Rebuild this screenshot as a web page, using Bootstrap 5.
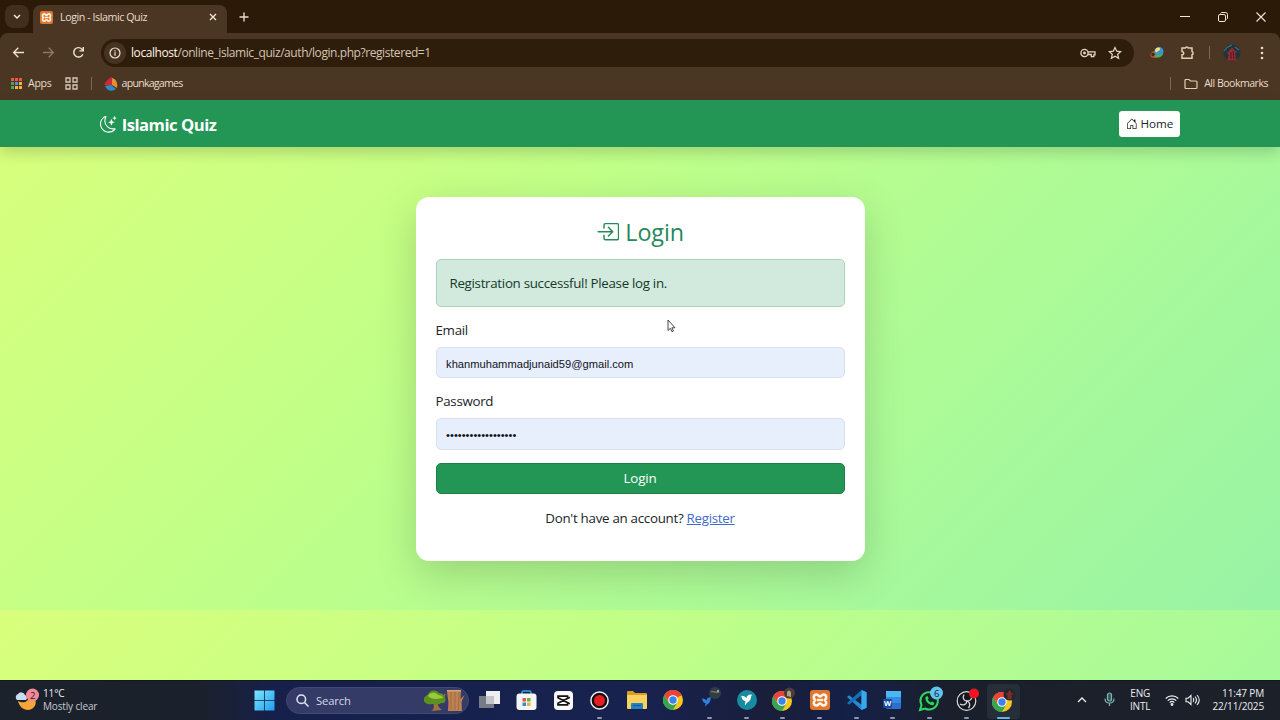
<!DOCTYPE html>
<html lang="en">
<head>
<meta charset="utf-8">
<meta name="viewport" content="width=device-width, initial-scale=1">
<title>Login - Islamic Quiz</title>
<link href="https://cdn.jsdelivr.net/npm/bootstrap@5.3.0/dist/css/bootstrap.min.css" rel="stylesheet">
<style>
  html { font-size: 13.333px; }
  body { width: 1280px; height: 720px; overflow: hidden; font-family: "Open Sans", "Noto Sans", sans-serif; color: #212529; }
  svg { display: block; flex: none; }

  /* browser window */
  .chrome { height: 100px; background: #2b1a08; color: #e9dccb; font-size: 10.7px; }
  .tabstrip { height: 33px; }
  .tabsearch { width: 24px; height: 23px; border-radius: 8px; background: #412e1c; margin: 5px 4px 0 5px; }
  .tab { width: 194px; height: 28px; margin-top: 5px; padding: 0 10px 4px 7px; background: #4a3623; border-radius: 8px 8px 0 0; }
  .tab-name { letter-spacing: -.44px; margin-left: 7px; }
  .newtab { margin: 8px 0 0 8px; }
  .winctl { gap: 28px; padding-right: 14px; }
  .toolbox { height: 67px; background: #4a3623; border-radius: 8px 8px 0 0; }
  .toolrow { height: 39px; padding-left: 12px; }
  .url { width: 1033px; height: 28px; border-radius: 14px; background: #2f1d0c; margin-left: 16px; padding: 0 12px 0 3px; }
  .info { width: 22px; height: 22px; border-radius: 50%; background: #463320; margin-right: 5px; }
  .addr { font-size: 12px; color: #d3c4b2; letter-spacing: -.43px; }
  .addr b { font-weight: 400; color: #fff3e4; }
  .bookrow { height: 23px; padding: 0 12px 0 11px; font-size: 10.6px; letter-spacing: -.3px; }
  .tight { letter-spacing: -.52px; }
  .vline { width: 1px; height: 13px; background: #7c6852; }

  /* page */
  .viewport { height: 580px; background: linear-gradient(135deg, #d9ff7c 0%, #c0ff88 38%, #a9fa99 72%, #98f3a5 100%) 0 0 / 1280px 510px repeat-y; }
  .topnav { height: 47px; background: #239655; box-shadow: 0 6px 13px rgba(0,0,0,.16); }
  .wrap { width: 1080px; margin: 0 auto; padding-top: 1px; }
  .brand { font-size: 16.67px; font-weight: 700; color: #fff; gap: 5px; letter-spacing: -.5px; line-height: 23px; padding-top: 1px; }
  .homebtn { height: 26px; width: 61px; font-size: 11.67px; gap: 3px; letter-spacing: -.1px; background: #fdfffd; border-radius: 3.3px; color: #212529; }
  .login { width: 449px; height: 364px; margin: 50px auto 0; padding: 20px; border-radius: 13px; background: #fefffe; box-shadow: 0 13px 40px rgba(0,0,0,.17); }
  .login h3 { color: #26895a; font-weight: 500; font-size: 23.33px; height: 28px; gap: 6px; margin-bottom: 14px; padding-top: 2px; letter-spacing: -.1px; }
  .login .alert { background: #d2eadd; border-color: #a9d3bd; border-radius: 5px; color: #15392a; height: 48px; margin-bottom: 13.5px; padding: 14px 13px 0; }
  .segoe { letter-spacing: -.3px; }
  .login .form-label { height: 20px; margin-bottom: 6.6px; padding-top: .6px; display: block; }
  .login .form-control { height: 31.4px; background: #e8effc; border-color: #d9e0ee; border-radius: 5px; font-family: "Liberation Sans", sans-serif; font-size: 11.15px; color: #10131c; padding: 4px 9px 2px 9.6px; margin-bottom: 13.3px; }
  .login .btn { height: 31px; background: #239655; border: 1px solid #1a8048; border-radius: 5px; color: #fff; padding: 1px 0 0; letter-spacing: -.1px; }
  .login .signup { margin-top: 14.5px; letter-spacing: -.28px; }
  .login a { color: #416bc9; }
  .pointer { position: absolute; left: 667px; top: 319px; }

  /* taskbar */
  .taskbar { height: 40px; background: linear-gradient(90deg, #1c222b 0, #1b212c 200px, #16204b 275px, #18224f 640px, #191e3a 770px, #152048 850px, #1a1f2c 950px, #1c2129 100%); color: #eceef2; font-size: 10px; line-height: 13px; border-top: 1px solid #15191f; letter-spacing: -.15px; }
  .weather { width: 238px; padding-left: 14px; gap: 4px; padding-bottom: 2px; }
  .start { width: 48px; padding-left: 16px; }
  .search { width: 183px; height: 27px; border-radius: 14px; background: #343b67; border: 1px solid #414871; padding: 0 2px 0 9px; font-size: 11.3px; gap: 9px; }
  .apps { display: grid; grid-template-columns: repeat(15, 36.67px); margin: 0 -1px 0 2.7px; height: 36px; }
  .app { display: flex; justify-content: center; align-items: center; position: relative; padding-bottom: 1px; }
  .run::after { content: ""; position: absolute; left: 15.5px; bottom: 0; width: 5px; height: 2px; border-radius: 1px; background: #9295b0; }
  .now { background: #262e39; border-radius: 4px; margin: 1px 2px 0; }
  .now::after { left: 10px; width: 13px; background: #5db6e8; }
  .tray { margin-left: auto; padding: 0 16px 2px 0; }
</style>
</head>
<body class="d-flex flex-column">

<svg width="0" height="0" class="position-absolute">
  <defs>
    <symbol id="chromelogo" viewBox="0 0 20 20">
      <circle cx="10" cy="10" r="10" fill="#f9c61c"/>
      <path d="M10 10 1.34 5A10 10 0 0 1 18.66 5Z" fill="#e8453a"/>
      <path d="M1.34 5A10 10 0 0 0 10 20L14.3 12.5 5.7 12.5Z" fill="#36a453"/>
      <path d="M10 5.4h8.9A10 10 0 0 0 1.34 5L6 12.5Z" fill="#e8453a"/>
      <circle cx="10" cy="10" r="4.8" fill="#fff"/><circle cx="10" cy="10" r="3.7" fill="#3b82ec"/>
    </symbol>
    <symbol id="xampp" viewBox="0 0 20 20">
      <rect width="20" height="20" rx="3" fill="#e0772f"/>
      <path d="M6.5 4.5C3.5 4.5 3 8 5 10 3 12 3.500 15.500 6.500 15.500 8.500 15.500 8.500 13.500 10 13.500 11.500 13.500 11.500 15.500 13.500 15.500 16.500 15.500 17 12 15 10 17 8 16.500 4.500 13.500 4.500 11.500 4.500 11.500 6.500 10 6.500 8.500 6.500 8.500 4.500 6.500 4.500Z" fill="none" stroke="#fff4e8" stroke-width="2.600"/>
      <path d="M7 10h6" stroke="#fff4e8" stroke-width="2.400"/>
    </symbol>
    <symbol id="bird" viewBox="0 0 20 20"><path d="M2 4c3 0 5 1 7 3 1-3 3-5 6-5l3 1-2 1c0 5-2 8-6 10l-3 4c0-3 0-4 1-6C4 11 2 8 2 4Z"/></symbol>
  </defs>
</svg>

<header class="chrome">
  <div class="tabstrip d-flex">
    <div class="tabsearch d-flex align-items-center justify-content-center">
      <svg width="8" height="6" viewBox="0 0 8 6" fill="none" stroke="#f3e7d8" stroke-width="1.500"><path d="m1 1 3 3 3-3"/></svg>
    </div>
    <div class="tab d-flex align-items-center">
      <svg width="13" height="13"><use href="#xampp"/></svg>
      <span class="tab-name me-auto">Login - Islamic Quiz</span>
      <svg width="8" height="8" viewBox="0 0 8 8" stroke="#f3e7d8" stroke-width="1.300"><path d="m1 1 6 6M7 1 1 7"/></svg>
    </div>
    <svg class="newtab" width="18" height="18" viewBox="0 0 18 18" stroke="#e9dccb" stroke-width="1.400"><path d="M9 4.500v9M4.500 9h9"/></svg>
    <div class="winctl d-flex align-items-center ms-auto">
      <svg width="10" height="10" viewBox="0 0 10 10" stroke="#f3e7d8"><path d="M0 4.500h10"/></svg>
      <svg width="10" height="10" viewBox="0 0 10 10" fill="none" stroke="#f3e7d8"><rect x=".5" y="2.500" width="7" height="7" rx="1.500"/><path d="M2.500 1.500C3 .7 3.500.5 4 .5h3.500a2 2 0 0 1 2 2V6c0 .7-.4 1-.9 1.400"/></svg>
      <svg width="10" height="10" viewBox="0 0 10 10" stroke="#f3e7d8" stroke-width="1.100"><path d="m.5.5 9 9M9.500.5l-9 9"/></svg>
    </div>
  </div>

  <div class="toolbox">
    <div class="toolrow d-flex align-items-center">
      <svg width="13" height="13" viewBox="0 0 13 13" fill="none" stroke="#efe3d4" stroke-width="1.300"><path d="M12 6.500H1.500M6.300 1.800 1.600 6.500l4.700 4.700"/></svg>
      <svg style="margin-left:17px" width="13" height="13" viewBox="0 0 13 13" fill="none" stroke="#8d7a66" stroke-width="1.300"><path d="M1 6.500h10.500M6.700 1.800l4.700 4.700-4.700 4.700"/></svg>
      <svg style="margin-left:17px" width="13" height="13" viewBox="0 0 13 13" fill="none" stroke="#efe3d4" stroke-width="1.400"><path d="M10.800 8.200A4.700 4.700 0 1 1 10 3.200L11 4.500"/><path d="M11.300 1v3.900H7.400"/></svg>
      <div class="url d-flex align-items-center">
        <div class="info d-flex align-items-center justify-content-center">
          <svg width="12" height="12" viewBox="0 0 12 12" fill="none" stroke="#f3e7d8" stroke-width="1.200"><circle cx="6" cy="6" r="5"/><path d="M6 5.300v3.400M6 3.200v1.200"/></svg>
        </div>
        <span class="addr"><b>localhost</b>/online_islamic_quiz/auth/login.php?registered=1</span>
        <svg class="ms-auto" width="16" height="10" viewBox="0 0 16 10" fill="none" stroke="#e5d7c5" stroke-width="1.300"><circle cx="4.500" cy="5" r="3.600"/><circle cx="4.500" cy="5" r=".8"/><path d="M8 3.800h7v3h-1.200v1.800h-2.500V6.500H8"/></svg>
        <svg style="margin-left:12px" width="14" height="14" viewBox="0 0 14 14" fill="none" stroke="#e5d7c5" stroke-width="1.200"><path d="m7 1.500 1.700 3.700 4 .4-3 2.700.9 4L7 10.200l-3.600 2.100.9-4-3-2.700 4-.4z"/></svg>
      </div>
      <svg style="margin-left:15px" width="16" height="14" viewBox="0 0 16 14"><ellipse cx="7" cy="8" rx="6" ry="3.600" fill="#c8462f" transform="rotate(-20 7 8)"/><circle cx="10" cy="5.500" r="4.500" fill="#3e92d8"/><path d="M6 4c2-3 5-3 5-1S8 5 7 7Z" fill="#f3e66a"/><path d="M4 9c4 1 7-1 10-1-1 4-7 5-10 1Z" fill="#43b749"/><circle cx="4" cy="8.500" r="1.700" fill="#1f3b22"/></svg>
      <svg style="margin-left:15px" width="15" height="15" viewBox="0 0 15 15" fill="none" stroke="#e5cfb2" stroke-width="1.500"><path d="M2 3h3.300a1.600 1.600 0 0 1 3 0H12v3.600a1.700 1.700 0 0 1 0 3.200v3.400H2V9.800c2.300-.2 2.300-3.100 0-3.300z"/></svg>
      <div class="vline" style="margin-left:14px"></div>
      <svg style="margin-left:13px" width="18" height="18" viewBox="0 0 18 18"><circle cx="9" cy="9" r="8.500" fill="#20353b"/><path d="M1 7c3-5 6-5 8-6M16 6l-4-3" stroke="#3d7380" stroke-width="1.200"/><path d="M9 3.500 11 6l3 2-2 1 1 6 2 1.500H4L6 11 4 9l3-3Z" fill="#982b31"/><path d="M8 8v7M10 7l1 8" stroke="#4b171f"/></svg>
      <svg style="margin-left:19px" width="4" height="14" viewBox="0 0 4 14" fill="#e9dccb"><circle cx="2" cy="2" r="1.300"/><circle cx="2" cy="7" r="1.300"/><circle cx="2" cy="12" r="1.300"/></svg>
    </div>
    <div class="bookrow d-flex align-items-center">
      <svg width="11" height="11" viewBox="0 0 11 11"><g fill="#ec5548"><path d="M0 0h3v3H0zM4 0h3v3H4zM8 0h3v3H8z"/></g><g fill="#48a75b"><path d="M0 4h3v3H0zM0 8h3v3H0z"/></g><g fill="#4b91e8"><path d="M4 4h3v3H4z"/></g><path d="M8 4h3v3H8zM4 8h3v3H4zM8 8h3v3H8z" fill="#efb63f"/></svg>
      <span style="margin-left:6px">Apps</span>
      <svg style="margin-left:13px" width="13" height="13" viewBox="0 0 13 13" fill="none" stroke="#d8c8b5" stroke-width="1.300"><path d="M1 1h4v4H1zM8 1h4v4H8zM1 8h4v4H1zM8 8h4v4H8z"/></svg>
      <div class="vline" style="margin-left:13px"></div>
      <svg style="margin-left:12px" width="14" height="14" viewBox="0 0 14 14"><path d="M0 8C2 4 5 1 8 0v9Z" fill="#cf2934"/><path d="M8 1c4 1 6 5 5 10L8 8Z" fill="#e88c35"/><path d="M1 9l6-1 5 4c-4 3-9 2-11-3Z" fill="#2a8fc4"/></svg>
      <span class="tight" style="margin-left:4px;letter-spacing:-.75px">apunkagames</span>
      <div class="vline ms-auto"></div>
      <svg style="margin-left:13px" width="14" height="12" viewBox="0 0 14 12" fill="none" stroke="#e5cfb2" stroke-width="1.200"><path d="M1 2.500c0-.7.300-1 1-1h3l1.500 1.500H12c.7 0 1 .3 1 1v5.500c0 .7-.3 1-1 1H2c-.7 0-1-.3-1-1z"/></svg>
      <span class="tight" style="margin-left:6px">All Bookmarks</span>
    </div>
  </div>
</header>

<main class="viewport">
  <nav class="topnav">
    <div class="wrap h-100 d-flex align-items-center justify-content-between">
      <div class="brand d-flex align-items-center">
        <svg width="16.670" height="16.670" viewBox="0 0 16 16" fill="#fff"><path d="M6 .278a.77.77 0 0 1 .08.858 7.200 7.200 0 0 0-.878 3.460c0 4.021 3.278 7.277 7.318 7.277q.792-.001 1.533-.16a.79.79 0 0 1 .81.316.73.73 0 0 1-.031.893A8.350 8.350 0 0 1 8.344 16C3.734 16 0 12.286 0 7.710 0 4.266 2.114 1.312 5.124.06A.75.75 0 0 1 6 .278M4.858 1.311A7.270 7.270 0 0 0 1.025 7.710c0 4.020 3.279 7.276 7.319 7.276a7.320 7.320 0 0 0 5.205-2.162q-.506.063-1.029.063c-4.610 0-8.343-3.714-8.343-8.290 0-1.167.242-2.278.681-3.286"/><path d="M10.794 3.148a.217.217 0 0 1 .412 0l.387 1.162c.173.518.579.924 1.097 1.097l1.162.387a.217.217 0 0 1 0 .412l-1.162.387a1.730 1.730 0 0 0-1.097 1.097l-.387 1.162a.217.217 0 0 1-.412 0l-.387-1.162A1.730 1.730 0 0 0 9.310 6.593l-1.162-.387a.217.217 0 0 1 0-.412l1.162-.387a1.730 1.730 0 0 0 1.097-1.097zM13.863.099a.145.145 0 0 1 .274 0l.258.774c.115.346.386.617.732.732l.774.258a.145.145 0 0 1 0 .274l-.774.258a1.160 1.160 0 0 0-.732.732l-.258.774a.145.145 0 0 1-.274 0l-.258-.774a1.160 1.160 0 0 0-.732-.732l-.774-.258a.145.145 0 0 1 0-.274l.774-.258c.346-.115.617-.386.732-.732z"/></svg>
        <span>Islamic Quiz</span>
      </div>
      <a class="homebtn d-flex align-items-center justify-content-center text-decoration-none" href="#">
        <svg width="11.670" height="11.670" viewBox="0 0 16 16" fill="#212529"><path d="M8.354 1.146a.5.5 0 0 0-.708 0l-6 6A.5.5 0 0 0 1.500 7.500v7a.5.5 0 0 0 .5.5h4.500a.5.5 0 0 0 .5-.5v-4h2v4a.5.5 0 0 0 .5.5H14a.5.5 0 0 0 .5-.5v-7a.5.5 0 0 0-.146-.354L13 5.793V2.500a.5.5 0 0 0-.5-.5h-1a.5.5 0 0 0-.5.5v1.293zM2.500 14V7.707l5.500-5.500 5.500 5.500V14H10v-4a.5.5 0 0 0-.5-.5h-3a.5.5 0 0 0-.5.5v4z"/></svg>
        <span>Home</span>
      </a>
    </div>
  </nav>

  <section class="login">
    <h3 class="d-flex align-items-center justify-content-center">
      <svg width="23.300" height="23.300" viewBox="0 0 16 16" fill="#26895a"><path d="M6 3.500a.5.5 0 0 1 .5-.5h8a.5.5 0 0 1 .5.5v9a.5.5 0 0 1-.5.5h-8a.5.5 0 0 1-.5-.5v-2a.5.5 0 0 0-1 0v2A1.500 1.500 0 0 0 6.500 14h8a1.500 1.500 0 0 0 1.500-1.500v-9A1.500 1.500 0 0 0 14.500 2h-8A1.500 1.500 0 0 0 5 3.500v2a.5.5 0 0 0 1 0z"/><path d="M11.854 8.354a.5.5 0 0 0 0-.708l-3-3a.5.5 0 1 0-.708.708L10.293 7.500H1.500a.5.5 0 0 0 0 1h8.793l-2.147 2.146a.5.5 0 0 0 .708.708z"/></svg>
      <span>Login</span>
    </h3>
    <div class="alert segoe">Registration successful! Please log in.</div>
    <form>
      <label class="form-label segoe" for="email">Email</label>
      <input class="form-control" id="email" type="text" value="khanmuhammadjunaid59@gmail.com" spellcheck="false">
      <label class="form-label segoe" for="pw">Password</label>
      <input class="form-control" id="pw" type="password" value="correcthorsebatter">
      <button class="btn w-100" type="button">Login</button>
    </form>
    <p class="text-center signup">Don't have an account? <a href="#">Register</a></p>
  </section>
  <svg class="pointer" width="9" height="14" viewBox="0 0 9 14"><path d="M1 1v10.500l2.400-2.200 1.500 3.400 1.500-.7-1.500-3.200H8z" fill="#fff" stroke="#30343a" stroke-width=".9"/></svg>
</main>

<footer class="taskbar d-flex align-items-center">
  <div class="weather d-flex align-items-center">
    <svg width="25" height="26" viewBox="0 0 25 26"><path d="M4 14c5 3 11 1 12-6 8 2 8 14-2 15-5 0-9-4-10-9Z" fill="#f5a53a"/><path d="M3 13a3.500 3.500 0 0 1 1-6 4 4 0 0 1 7 1 3 3 0 0 1 1 5Z" fill="#c9dcf5"/><circle cx="18.500" cy="8" r="6.500" fill="#f28a98"/><text x="16" y="11.500" font-size="9.500" fill="#33161c">2</text></svg>
    <div>11°C<br><span style="color:#c6cad1">Mostly clear</span></div>
  </div>
  <div class="start">
    <svg width="21" height="21" viewBox="0 0 21 21"><defs><linearGradient id="win" x2="1" y2="1"><stop stop-color="#7fe6fb"/><stop offset="1" stop-color="#1c9ff0"/></linearGradient></defs><path d="M.5.5h9.700v9.700H.5zM11 .5h9.500v9.700H11zM.5 11h9.700v9.500H.5zM11 11h9.500v9.500H11z" fill="url(#win)"/></svg>
  </div>
  <div class="search d-flex align-items-center">
    <svg width="13" height="13" viewBox="0 0 13 13" fill="none" stroke="#e4e8f5" stroke-width="1.500"><circle cx="5.300" cy="5.300" r="4.300"/><path d="m8.500 8.500 4 4"/></svg>
    <span style="color:#d5d8ea;margin-left:-2px">Search</span>
    <svg class="ms-auto" width="43" height="23" viewBox="0 0 43 23"><path d="M8 22c4-2 3-6 2-9l4-1c0 4 2 7 5 9Z" fill="#a5713e"/><path d="M12 14 20 11l2-6" stroke="#9b6a3b" stroke-width="1.500" fill="none"/><path d="M1 10c0-3 3-3 4-5 3-5 9-4 11-1 4 0 6 3 6 5 2 3-1 6-4 5-4 3-7 1-9 1-4 1-9-1-8-5Z" fill="#5b921f"/><path d="M5 7c2-4 8-4 10-1 3 0 4 1 5 3-5 1-11 2-15-2Z" fill="#9cc83e"/><path d="M24 1h14l-.5 9 4-4-3 7 .5 9H25l.5-9-1-6Z" fill="#bd8254"/><path d="M28 3v18M32 2v19M36 3l-.5 18" stroke="#98613a" stroke-width=".7" fill="none"/><path d="M24 1h14v1.500H24z" fill="#d8a376"/></svg>
  </div>
  <div class="apps">
    <div class="app"><svg width="22" height="22" viewBox="0 0 22 22"><rect x="7" y="2" width="14" height="13" fill="#eeeeef"/><rect x="0" y="7" width="15" height="12" fill="#777b88"/><path d="M7 7h8v8H7z" fill="#c3c4c9"/></svg></div>
    <div class="app"><svg width="21" height="22" viewBox="0 0 21 22"><path d="M6 6V3.500Q6 2 7.500 2h6Q15 2 15 3.500V6" fill="none" stroke="#35a5df" stroke-width="1.500"/><rect x=".5" y="4.500" width="20" height="16.500" rx="3" fill="#f4f5f7"/><path d="M6.500 9h3.500v3.500H6.500z" fill="#df5a41"/><path d="M11 9h3.500v3.500H11z" fill="#6dae3c"/><path d="M6.500 13.500h3.500V17H6.500z" fill="#318ecb"/><path d="M11 13.500h3.500V17H11z" fill="#e8b53b"/></svg></div>
    <div class="app"><svg width="19" height="19" viewBox="0 0 19 19"><rect width="19" height="19" rx="4" fill="#f8f8f8"/><path d="M15.800 6.200 4 12.300v1.500h9.500v-1.200M15.800 12.800 4 6.700V5.200h9.500v1.200" fill="none" stroke="#111" stroke-width="1.700"/></svg></div>
    <div class="app run"><svg width="19" height="19" viewBox="0 0 19 19"><circle cx="9.500" cy="9.500" r="8.600" fill="#140c10" stroke="#f5f5f5" stroke-width="1.500"/><circle cx="9.500" cy="9.500" r="5.500" fill="#e41c23"/></svg></div>
    <div class="app"><svg width="22" height="20" viewBox="0 0 22 20"><path d="M1 2Q1 1 2 1h5l2 2h11q1 0 1 1v13H1Z" fill="#d99d27"/><path d="M1 5h20v13q0 1-1 1H2q-1 0-1-1Z" fill="#f8d25a"/><path d="M5 14q0-1 1-1h10q1 0 1 1v5H5Z" fill="#2481c5"/><path d="M7 15.500h8" stroke="#155b94"/></svg></div>
    <div class="app"><svg width="20" height="20"><use href="#chromelogo"/></svg></div>
    <div class="app run"><svg width="26" height="26" viewBox="0 0 26 26"><svg x="4" y="9" width="12" height="12" fill="#2d80df"><use href="#bird"/></svg><circle cx="18" cy="6" r="6" fill="#323d43"/><path d="M14 5c3-2 5 2 8 0" stroke="#66766d" stroke-width="1.500" fill="none"/><circle cx="21" cy="4" r="1" fill="#bac1c4"/></svg></div>
    <div class="app run"><svg width="20" height="20" viewBox="0 0 20 20"><circle cx="10" cy="10" r="10" fill="#178c9f"/><svg x="3" y="3" width="14" height="14" fill="#fff"><use href="#bird"/></svg></svg></div>
    <div class="app run"><svg width="26" height="26" viewBox="0 0 26 26"><use href="#chromelogo" x="2" y="4" width="20" height="20"/><circle cx="19.500" cy="6" r="5.500" fill="#493d37"/><path d="M17 9V5q2-3 4 0v5" fill="#b59b83"/></svg></div>
    <div class="app run"><svg width="20" height="20"><use href="#xampp"/></svg></div>
    <div class="app run"><svg width="20" height="20" viewBox="0 0 20 20"><path d="m14.500 0 5 2.200v15.600l-5 2.200L0 7l2-1.700 12.500 9.500Z" fill="#238bd0"/><path d="M14.500 0v5.200L2 14.700 0 13Z" fill="#1770b3"/><path d="m14.500 0 5 2.200v15.600l-5 2.200Z" fill="#39a7ee"/></svg></div>
    <div class="app run"><svg width="20" height="20" viewBox="0 0 20 20"><rect x="3" y="1" width="15" height="18" rx="1.500" fill="#2b6fd2"/><path d="M3 1h15v6H3z" fill="#4db5f4"/><path d="M3 7h15v6H3z" fill="#318be2"/><rect x="0" y="9" width="9" height="9" rx="1" fill="#174a9c"/><text x="1" y="16" font-size="7.500" font-weight="700" fill="#fff">W</text></svg></div>
    <div class="app run"><svg width="26" height="28" viewBox="0 0 26 28"><path d="m3 24 1.500-5A8.700 8.700 0 1 1 8 22.500Z" fill="#10251f" stroke="#31d565" stroke-width="2"/><path d="M8.500 11c-1 4 4 9 8 8l1-2-2.500-1.500-1.300 1q-2-1-3-3l1-1L10.500 10Z" fill="#31d565"/><circle cx="19.500" cy="7" r="6.500" fill="#62c3ef"/><text x="16.900" y="10.500" font-size="9.500" fill="#10202a">6</text></svg></div>
    <div class="app run"><svg width="26" height="26" viewBox="0 0 26 26"><circle cx="12.500" cy="14" r="9.300" fill="#16191f" stroke="#d8dade" stroke-width="1.200"/><path d="M10 7.500c-2 3.500 0 6.500 3 6.500 2.500 0 4.500-1.500 4.500-3.500M13 14c-.5 3.500-4 5-7 3M13 14c3 1 3.500 4.500 1.500 7" fill="none" stroke="#d8dade" stroke-width="1.300"/><circle cx="20" cy="6.500" r="5" fill="#f01420"/></svg></div>
    <div class="app run now"><svg width="26" height="26" viewBox="0 0 26 26"><use href="#chromelogo" x="2" y="4" width="20" height="20"/><circle cx="19.500" cy="6.500" r="6" fill="#24262a"/><path d="m19.500 2 2 3 2 1-2 1v4h-4V7l-2-1 2-1Z" fill="#7e2b2d"/></svg></div>
  </div>
  <div class="tray d-flex align-items-center">
    <svg width="10" height="6" viewBox="0 0 10 6" fill="none" stroke="#eceef2" stroke-width="1.300"><path d="m1 5 4-4 4 4"/></svg>
    <svg style="margin-left:17px" width="11" height="15" viewBox="0 0 11 15" fill="none" stroke="#7fb5b5" stroke-width="1.200"><rect x="3.500" y="1" width="4" height="8" rx="2" fill="#34595b"/><path d="M1 6.500c0 6 9 6 9 0M5.500 11v3"/></svg>
    <div class="text-center" style="margin-left:15px">ENG<br>INTL</div>
    <svg style="margin-left:15px" width="14" height="12" viewBox="0 0 14 12" fill="none" stroke="#eceef2" stroke-width="1.200"><path d="M.7 4.500a9 9 0 0 1 12.600 0M2.700 6.600a6.100 6.100 0 0 1 8.600 0M4.700 8.600a3.300 3.300 0 0 1 4.600 0"/><circle cx="7" cy="10.500" r=".8" fill="#eceef2"/></svg>
    <svg style="margin-left:6px" width="15" height="12" viewBox="0 0 15 12" fill="none" stroke="#eceef2" stroke-width="1.100"><path d="M1 4.200h2L6 1.500v9L3 7.800H1zM8 4.200q1.500 1.800 0 3.600M10 2.600q3 3.400 0 6.800M12 1q4.500 5 0 10"/></svg>
    <div class="text-end" style="margin-left:12px">11:47 PM<br>22/11/2025</div>
  </div>
</footer>

<script src="https://cdn.jsdelivr.net/npm/bootstrap@5.3.0/dist/js/bootstrap.bundle.min.js"></script>
</body>
</html>
